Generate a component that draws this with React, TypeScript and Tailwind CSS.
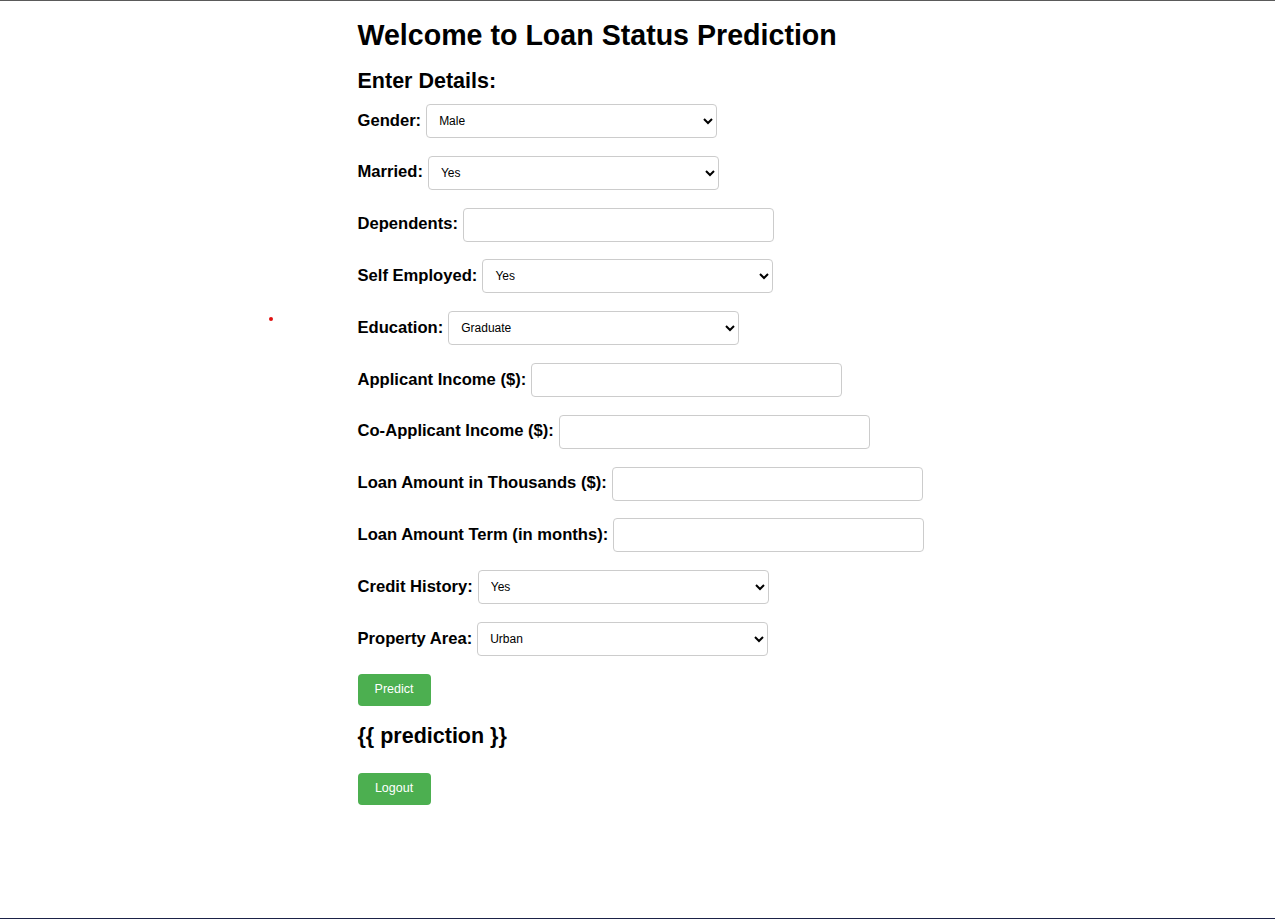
import React from 'react';

type Field =
    | { label: string; kind: 'select'; options: string[] }
    | { label: string; kind: 'input' };

const fields: Field[] = [
    { label: 'Gender:', kind: 'select', options: ['Male', 'Female'] },
    { label: 'Married:', kind: 'select', options: ['Yes', 'No'] },
    { label: 'Dependents:', kind: 'input' },
    { label: 'Self Employed:', kind: 'select', options: ['Yes', 'No'] },
    { label: 'Education:', kind: 'select', options: ['Graduate', 'Not Graduate'] },
    { label: 'Applicant Income ($):', kind: 'input' },
    { label: 'Co-Applicant Income ($):', kind: 'input' },
    { label: 'Loan Amount in Thousands ($):', kind: 'input' },
    { label: 'Loan Amount Term (in months):', kind: 'input' },
    { label: 'Credit History:', kind: 'select', options: ['Yes', 'No'] },
    { label: 'Property Area:', kind: 'select', options: ['Urban', 'Semiurban', 'Rural'] },
];

const App: React.FC = () => {
    return (
        <div className="relative min-h-[919px] bg-white border-t border-t-[#5a5a5a] border-b border-b-[#1b2248] font-['Liberation_Sans',Arial,sans-serif] text-black">
            {/* stray cursor mark */}
            <div className="absolute left-[269px] top-[316px] w-[4px] h-[4px] rounded-full bg-[#e01010]" />

            <div className="w-[600px] mx-auto px-5 flex flex-col items-start">
                <h1 className="mt-[18px] text-[28.6px] leading-[32px] font-bold">Welcome to Loan Status Prediction</h1>
                <h2 className="mt-[17px] text-[21.5px] leading-[26px] font-bold">Enter Details:</h2>

                <form className="mt-[10px] flex flex-col items-start">
                    {fields.map((f) => (
                        <div key={f.label} className="flex items-center gap-[5px] h-[34px] mb-[17.8px]">
                            <label className="text-[16.6px] font-bold whitespace-nowrap">{f.label}</label>
                            {f.kind === 'select' ? (
                                <select className="w-[291px] h-[34px] px-2 text-[12px] border border-[#cccccc] rounded bg-white">
                                    {f.options.map((o) => (
                                        <option key={o}>{o}</option>
                                    ))}
                                </select>
                            ) : (
                                <input type="text" className="w-[311px] h-[34px] px-2 text-[12px] border border-[#cccccc] rounded bg-white" />
                            )}
                        </div>
                    ))}
                    <button type="button" className="w-[73px] h-[32px] rounded bg-[#4caf50] text-white text-[12.5px]">
                        Predict
                    </button>
                </form>

                <h2 className="mt-[17px] text-[21.5px] leading-[26px] font-bold">{'{{ prediction }}'}</h2>

                <button type="button" className="mt-[24px] w-[73px] h-[32px] rounded bg-[#4caf50] text-white text-[12.5px]">
                    Logout
                </button>
            </div>
        </div>
    );
};

export default App;
